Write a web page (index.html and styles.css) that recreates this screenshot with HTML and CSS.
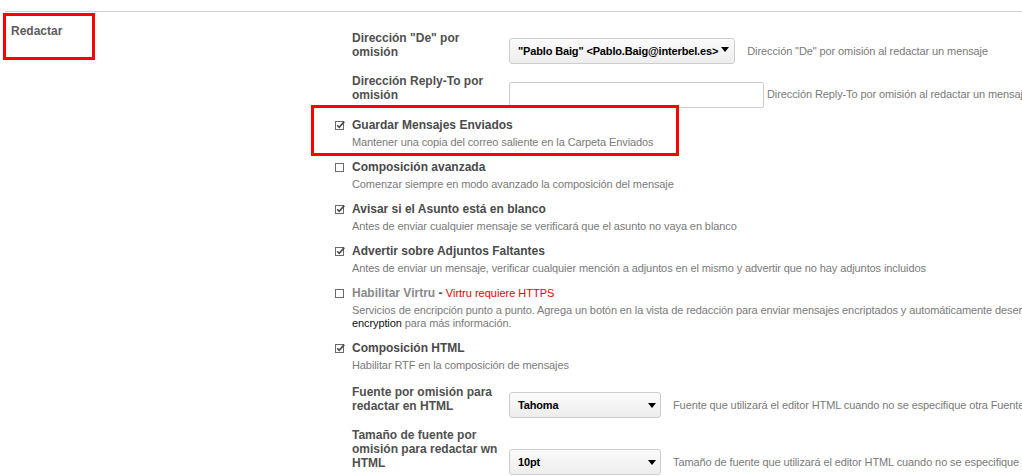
FILE: index.html
```html
<!DOCTYPE html>
<html lang="es">
<head>
<meta charset="utf-8">
<title>Redactar</title>
<link rel="stylesheet" href="styles.css">
</head>
<body>
<div class="page">
  <div class="rule"></div>
  <div class="section">
    <div class="section-head"><h2>Redactar</h2></div>
    <div class="settings">
      <div class="field">
        <label class="field-label">Dirección "De" por omisión</label>
        <div class="select select-auto"><span>"Pablo Baig" &lt;Pablo.Baig@interbel.es&gt;</span><svg class="caret" width="8" height="5" viewBox="0 0 8 5"><polygon points="0,0 8,0 4,5"/></svg></div>
        <span class="field-desc">Dirección "De" por omisión al redactar un mensaje</span>
      </div>
      <div class="field">
        <label class="field-label">Dirección Reply-To por omisión</label>
        <input class="text-input" type="text">
        <span class="field-desc field-desc-near">Dirección Reply-To por omisión al redactar un mensaje</span>
      </div>

      <div class="options">
        <div class="option option-highlight">
          <div class="option-title"><svg class="check" width="10" height="10" viewBox="0 0 10 10"><rect x="0.5" y="1.5" width="8" height="8"/><path class="tick" d="M2.2 5.2 L4.2 7.3 L9.3 1.6"/></svg>Guardar Mensajes Enviados</div>
          <div class="option-desc">Mantener una copia del correo saliente en la Carpeta Enviados</div>
        </div>
        <div class="option">
          <div class="option-title"><svg class="check" width="10" height="10" viewBox="0 0 10 10"><rect x="0.5" y="1.5" width="8" height="8"/></svg>Composición avanzada</div>
          <div class="option-desc">Comenzar siempre en modo avanzado la composición del mensaje</div>
        </div>
        <div class="option">
          <div class="option-title"><svg class="check" width="10" height="10" viewBox="0 0 10 10"><rect x="0.5" y="1.5" width="8" height="8"/><path class="tick" d="M2.2 5.2 L4.2 7.3 L9.3 1.6"/></svg>Avisar si el Asunto está en blanco</div>
          <div class="option-desc">Antes de enviar cualquier mensaje se verificará que el asunto no vaya en blanco</div>
        </div>
        <div class="option">
          <div class="option-title"><svg class="check" width="10" height="10" viewBox="0 0 10 10"><rect x="0.5" y="1.5" width="8" height="8"/><path class="tick" d="M2.2 5.2 L4.2 7.3 L9.3 1.6"/></svg>Advertir sobre Adjuntos Faltantes</div>
          <div class="option-desc">Antes de enviar un mensaje, verificar cualquier mención a adjuntos en el mismo y advertir que no hay adjuntos incluidos</div>
        </div>
        <div class="option">
          <div class="option-title"><svg class="check" width="10" height="10" viewBox="0 0 10 10"><rect x="0.5" y="1.5" width="8" height="8"/></svg><span class="disabled">Habilitar Virtru</span>&nbsp;-&nbsp;<span class="warn">Virtru requiere HTTPS</span></div>
          <div class="option-desc">Servicios de encripción punto a punto. Agrega un botón en la vista de redacción para enviar mensajes encriptados y automáticamente desencriptar los mensajes recibidos. Visita Virtru<br><a class="link" href="#">encryption</a> para más información.</div>
        </div>
        <div class="option">
          <div class="option-title"><svg class="check" width="10" height="10" viewBox="0 0 10 10"><rect x="0.5" y="1.5" width="8" height="8"/><path class="tick" d="M2.2 5.2 L4.2 7.3 L9.3 1.6"/></svg>Composición HTML</div>
          <div class="option-desc">Habilitar RTF en la composición de mensajes</div>
        </div>
      </div>

      <div class="field">
        <label class="field-label">Fuente por omisión para redactar en HTML</label>
        <div class="select select-fixed"><span>Tahoma</span><svg class="caret" width="8" height="5" viewBox="0 0 8 5"><polygon points="0,0 8,0 4,5"/></svg></div>
        <span class="field-desc">Fuente que utilizará el editor HTML cuando no se especifique otra Fuente</span>
      </div>
      <div class="field">
        <label class="field-label">Tamaño de fuente por omisión para redactar wn HTML</label>
        <div class="select select-fixed"><span>10pt</span><svg class="caret" width="8" height="5" viewBox="0 0 8 5"><polygon points="0,0 8,0 4,5"/></svg></div>
        <span class="field-desc">Tamaño de fuente que utilizará el editor HTML cuando no se especifique otro tamaño</span>
      </div>
    </div>
  </div>
</div>
</body>
</html>
```

FILE: styles.css
```css
html, body {
  margin: 0;
  overflow: hidden;
  background: #fff;
}
body {
  font-family: "Liberation Sans", Arial, sans-serif;
}
.page {
  width: 1500px;
  padding-top: 11px;
}
.rule {
  margin-left: 5px;
  border-top: 1px solid #cfcfcf;
}
.section {
  display: flex;
  align-items: flex-start;
}
.section-head {
  margin: 1px 0 0 3px;
  width: 92px;
  height: 47px;
  box-sizing: border-box;
  border: 3px solid #f00;
  padding: 7px 0 0 5px;
  flex: none;
}
.section-head h2 {
  margin: 0;
  font-size: 12px;
  line-height: 16px;
  font-weight: bold;
  color: #5c5c5c;
}
.settings {
  margin-left: 240px;
  padding-top: 19px;
}
.field {
  display: flex;
  align-items: flex-end;
  margin-left: 17px;
  margin-bottom: 10px;
}
.field-label {
  width: 150px;
  margin-right: 7px;
  flex: none;
  font-size: 12px;
  line-height: 14px;
  font-weight: bold;
  color: #505050;
  padding-bottom: 5px;
}
.select {
  display: flex;
  align-items: center;
  height: 26px;
  box-sizing: border-box;
  border: 1px solid #cdcdcd;
  border-radius: 3px;
  background: linear-gradient(#fbfbfb, #ededed);
  padding: 0 5px 0 8px;
  font-size: 11px;
  letter-spacing: -0.15px;
  font-weight: bold;
  color: #000;
  flex: none;
}
.select-auto {
  gap: 3px;
}
.select-auto .caret {
  margin-top: -4px;
}
.select-fixed {
  width: 152px;
  justify-content: space-between;
  padding-right: 4px;
}
.caret {
  display: block;
  fill: #000;
}
.text-input {
  width: 255px;
  height: 26px;
  box-sizing: border-box;
  border: 1px solid #cdcdcd;
  border-radius: 2px;
  margin: 0 0 -1px 0;
  padding: 0;
  background: #fff;
  flex: none;
}
.field-desc {
  margin-left: 12px;
  font-size: 11px;
  letter-spacing: -0.1px;
  line-height: 14px;
  color: #7a7a7a;
  padding-bottom: 6px;
  white-space: nowrap;
}
.field-desc-near {
  margin-left: 3px;
}
.options {
  margin-top: 4px;
  margin-bottom: 13px;
}
.option {
  margin-bottom: 10px;
}
.option:last-child {
  margin-bottom: 0;
}
.option-highlight {
  position: relative;
}
.option-highlight::before {
  content: "";
  position: absolute;
  left: -24px;
  top: -12px;
  width: 368px;
  height: 51px;
  box-sizing: border-box;
  border: 3px solid #f00;
}
.option-title {
  display: flex;
  align-items: center;
  font-size: 12px;
  line-height: 16px;
  font-weight: bold;
  color: #4a4a4a;
  white-space: nowrap;
}
.check {
  display: block;
  flex: none;
  margin-right: 7px;
}
.check rect {
  fill: #fff;
  stroke: #6a6a6a;
  stroke-width: 1;
}
.check .tick {
  fill: none;
  stroke: #4a4a4a;
  stroke-width: 1.6;
}
.disabled {
  color: #8a8a8a;
}
.warn {
  color: #ee0000;
  font-size: 11px;
  font-weight: normal;
}
.option-desc {
  margin: 3px 0 0 17px;
  font-size: 11px;
  letter-spacing: -0.1px;
  line-height: 13px;
  color: #7a7a7a;
  white-space: nowrap;
}
.link {
  color: #111;
  text-decoration: none;
}
```
